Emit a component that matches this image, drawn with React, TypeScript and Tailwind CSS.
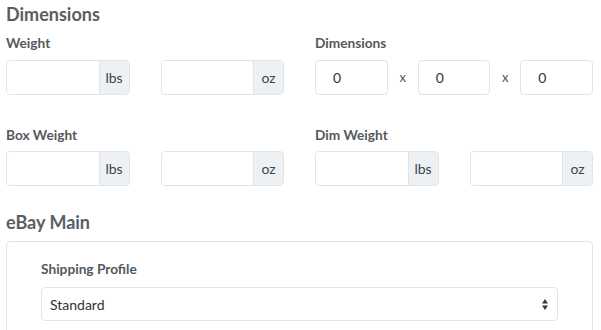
import type { ReactNode } from 'react'

const font = { fontFamily: 'Lato, "Open Sans", sans-serif' }

function Label({ children }: { children: ReactNode }) {
  return <div className="text-[13.7px] font-bold leading-4 text-[#55595d]">{children}</div>
}

function UnitInput({ unit }: { unit: string }) {
  return (
    <div className="flex h-[35px] rounded-[4px] border border-[#dfe5e8] overflow-hidden">
      <div className="flex-1 bg-white" />
      <div className="w-[30px] border-l border-[#dfe5e8] bg-[#eef1f3] flex items-center justify-center text-[14px] text-[#3f4448]">
        {unit}
      </div>
    </div>
  )
}

function DimInput() {
  return (
    <div className="flex-1 h-[35px] rounded-[4px] border border-[#dfe5e8] flex items-center pl-[17px] text-[14px] text-[#333]">
      0
    </div>
  )
}

export default function App() {
  return (
    <div style={font} className="w-[601px] h-[330px] overflow-hidden bg-white pl-[6px] pr-[8px]">
      {/* Dimensions */}
      <h2 className="pt-[2px] text-[18px] font-bold leading-6 text-[#5a5e62]">Dimensions</h2>

      <div className="grid grid-cols-4 gap-x-[31px] mt-[9px]">
        <div className="col-span-2"><Label>Weight</Label></div>
        <div className="col-span-2"><Label>Dimensions</Label></div>
        <div className="mt-[9px]"><UnitInput unit="lbs" /></div>
        <div className="mt-[9px]"><UnitInput unit="oz" /></div>
        <div className="col-span-2 mt-[9px] flex items-center">
          <DimInput />
          <span className="w-[30px] text-center text-[13px] text-[#555]">x</span>
          <DimInput />
          <span className="w-[30px] text-center text-[13px] text-[#555]">x</span>
          <DimInput />
        </div>
      </div>

      <div className="grid grid-cols-4 gap-x-[31px] mt-[32px]">
        <div className="col-span-2"><Label>Box Weight</Label></div>
        <div className="col-span-2"><Label>Dim Weight</Label></div>
        <div className="mt-[8px]"><UnitInput unit="lbs" /></div>
        <div className="mt-[8px]"><UnitInput unit="oz" /></div>
        <div className="mt-[8px]"><UnitInput unit="lbs" /></div>
        <div className="mt-[8px]"><UnitInput unit="oz" /></div>
      </div>

      {/* eBay Main */}
      <h2 className="mt-[24px] text-[18px] font-bold leading-6 text-[#5a5e62]">eBay Main</h2>
      <div className="mt-[7px] rounded-[4px] border border-[#dfe5e8] pt-[19px] px-[34px] pb-[20px]">
        <Label>Shipping Profile</Label>
        <div className="mt-[10px] h-[34px] rounded-[4px] border border-[#dfe5e8] flex items-center justify-between pl-[8px] pr-[9px] text-[14px] text-[#333]">
          <span>Standard</span>
          <svg width="6" height="11" viewBox="0 0 6 11" className="text-[#2f3a4a]">
            <path d="M3 0 L6 4.5 H0 Z" fill="currentColor" />
            <path d="M3 11 L6 6.5 H0 Z" fill="currentColor" />
          </svg>
        </div>
      </div>
    </div>
  )
}
